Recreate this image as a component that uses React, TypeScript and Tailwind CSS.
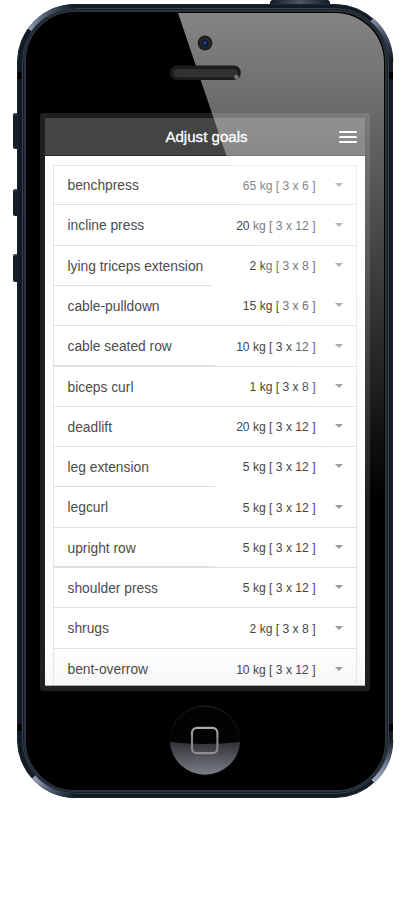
import React from "react";

type Goal = { name: string; kg: string; reps: string; h: string; line: string };

const FULL = "w-full border-[#e0e0e0]";

const goals: Goal[] = [
  { name: "benchpress", kg: "65", reps: "6", h: "h-[39px]", line: FULL },
  { name: "incline press", kg: "20", reps: "12", h: "h-[41px]", line: FULL },
  { name: "lying triceps extension", kg: "2", reps: "8", h: "h-[40px]", line: "w-[157px] border-[#dedede]" },
  { name: "cable-pulldown", kg: "15", reps: "6", h: "h-[40px]", line: FULL },
  { name: "cable seated row", kg: "10", reps: "12", h: "h-[41px]", line: FULL },
  { name: "biceps curl", kg: "1", reps: "8", h: "h-[40px]", line: FULL },
  { name: "deadlift", kg: "20", reps: "12", h: "h-[40px]", line: FULL },
  { name: "leg extension", kg: "5", reps: "12", h: "h-[40px]", line: "w-[161px] border-[#dedede]" },
  { name: "legcurl", kg: "5", reps: "12", h: "h-[41px]", line: FULL },
  { name: "upright row", kg: "5", reps: "12", h: "h-[40px]", line: FULL },
  { name: "shoulder press", kg: "5", reps: "12", h: "h-[40px]", line: FULL },
  { name: "shrugs", kg: "2", reps: "8", h: "h-[41px]", line: FULL },
  { name: "bent-overrow", kg: "10", reps: "12", h: "h-[41px]", line: FULL },
];

const doubled = ["cable seated row", "upright row"];

function GoalRow({ goal }: { goal: Goal }) {
  return (
    <li className={`flex shrink-0 flex-col ${goal.h}`}>
      <div className="flex min-h-0 flex-1 items-center pl-[13.5px] pr-[13.5px] pt-[2px]">
        <span className="flex-1 whitespace-nowrap text-[13.8px] leading-[18px] text-[#4c4c4c]">{goal.name}</span>
        <span className="mb-[1px] whitespace-nowrap text-[12.1px] leading-[18px] text-[#464646]">
          {goal.kg} kg [ 3 x {goal.reps} ]
        </span>
        <svg className="mb-[3px] ml-[19px]" width="8" height="4" viewBox="0 0 8 4">
          <path d="M0 0H8L4 4Z" fill="#999" />
        </svg>
      </div>
      {doubled.includes(goal.name) && <div className="-mt-px h-px w-[161px] bg-[#e0e0e0]" />}
      <div className={`border-b ${goal.line}`} />
    </li>
  );
}

function Header() {
  return (
    <header className="flex h-[38px] shrink-0 items-center border-b border-[#262626] bg-[#444] pl-[26px] pr-[8px]">
      <h1 className="flex-1 pl-[3px] text-center text-[15.1px] font-medium leading-[20px] text-white [-webkit-text-stroke:0.3px_white]">
        Adjust goals
      </h1>
      <div className="flex w-[18px] flex-col gap-[3px]">
        <i className="h-[2px] rounded-full bg-white" />
        <i className="h-[2px] rounded-full bg-white" />
        <i className="h-[2px] rounded-full bg-white" />
      </div>
    </header>
  );
}

function Camera() {
  return (
    <svg className="mt-[22px]" width="16" height="16" viewBox="0 0 16 16">
      <defs>
        <radialGradient id="lens">
          <stop offset="0" stopColor="#2457a8" />
          <stop offset="0.5" stopColor="#102c62" />
          <stop offset="1" stopColor="#0a0d18" />
        </radialGradient>
      </defs>
      <circle cx="8" cy="8" r="7.4" fill="#1d1d1f" />
      <circle cx="8" cy="8" r="5" fill="#2b2c30" />
      <circle cx="8" cy="8" r="3.5" fill="url(#lens)" />
    </svg>
  );
}

function Speaker() {
  return (
    <svg className="mt-[14px]" width="72" height="16" viewBox="0 0 72 16">
      <defs>
        <pattern id="mesh" width="2" height="2" patternUnits="userSpaceOnUse">
          <rect width="2" height="2" fill="#3b3b3b" />
          <rect width="1" height="1" fill="#242424" />
          <rect x="1" y="1" width="1" height="1" fill="#2b2b2b" />
        </pattern>
        <radialGradient id="spark">
          <stop offset="0" stopColor="#bbb" />
          <stop offset="1" stopColor="#777" stopOpacity="0" />
        </radialGradient>
      </defs>
      <rect x="0.8" y="0.5" width="71" height="14.5" rx="7.2" fill="#1c1c1c" />
      <rect x="4.5" y="4" width="64" height="8" rx="4" fill="url(#mesh)" />
      <circle cx="67.3" cy="12" r="3.2" fill="url(#spark)" />
    </svg>
  );
}

function HomeButton() {
  return (
    <svg width="72" height="72" viewBox="0 0 72 72">
      <defs>
        <linearGradient id="shine" x1="0" y1="0" x2="0" y2="1">
          <stop offset="0" stopColor="#303136" />
          <stop offset="1" stopColor="#7b7e86" />
        </linearGradient>
        <linearGradient id="rim" x1="0" y1="0" x2="0" y2="1">
          <stop offset="0" stopColor="#2c2c2c" />
          <stop offset="0.5" stopColor="#080808" />
        </linearGradient>
        <linearGradient id="square" x1="0" y1="0" x2="0" y2="1">
          <stop offset="0" stopColor="#aaa" />
          <stop offset="0.5" stopColor="#808184" />
          <stop offset="1" stopColor="#8c8e92" />
        </linearGradient>
      </defs>
      <circle cx="36" cy="36" r="35" fill="#030303" stroke="url(#rim)" strokeWidth="0.8" />
      <path d="M0.8 37Q36 41 71.2 37A35.3 35.3 0 0 1 0.8 37Z" fill="url(#shine)" />
      <rect x="23" y="22.8" width="25.4" height="25.4" rx="5" fill="none" stroke="url(#square)" strokeWidth="2.2" />
    </svg>
  );
}

function EdgeHighlights() {
  return (
    <svg className="pointer-events-none absolute inset-0" width="377" height="794" viewBox="0 0 377 794">
      <defs>
        <linearGradient id="tl" gradientUnits="userSpaceOnUse" x1="12" y1="26" x2="58" y2="2">
          <stop offset="0" stopColor="#929caf" />
          <stop offset="0.35" stopColor="#5c677b" />
          <stop offset="1" stopColor="#111a25" />
        </linearGradient>
        <linearGradient id="tr" gradientUnits="userSpaceOnUse" x1="354" y1="16" x2="374" y2="58">
          <stop offset="0" stopColor="#8792a7" />
          <stop offset="0.4" stopColor="#465165" />
          <stop offset="1" stopColor="#111a25" />
        </linearGradient>
        <linearGradient id="bl" gradientUnits="userSpaceOnUse" x1="16" y1="773" x2="58" y2="792">
          <stop offset="0" stopColor="#9aa6bc" />
          <stop offset="0.4" stopColor="#56637a" />
          <stop offset="1" stopColor="#111a25" />
        </linearGradient>
        <linearGradient id="br" gradientUnits="userSpaceOnUse" x1="356" y1="779" x2="374" y2="734">
          <stop offset="0" stopColor="#a3aec2" />
          <stop offset="0.4" stopColor="#77839a" />
          <stop offset="1" stopColor="#111a25" />
        </linearGradient>
      </defs>
      <g fill="none" strokeWidth="4.4">
        <path d="M12.5 25.8A56 56 0 0 1 58.4 2.2" stroke="url(#tl)" />
        <path d="M355 15.7A56 56 0 0 1 374.1 58" stroke="url(#tr)" />
        <path d="M16.6 773A56 56 0 0 0 58.4 791.8" stroke="url(#bl)" />
        <path d="M356 777.3A56 56 0 0 0 374.1 736" stroke="url(#br)" />
      </g>
      <g fill="#000">
        <rect x="0.5" y="68" width="4" height="7" />
        <rect x="372" y="68" width="4" height="7" />
        <rect x="0.5" y="720" width="4" height="7" />
        <rect x="372" y="720" width="4" height="7" />
      </g>
    </svg>
  );
}

export default function App() {
  return (
    <main
      className="h-[917px] w-[411px] overflow-hidden bg-white pl-[17px] pt-[4px]"
      style={{ fontFamily: '"Liberation Sans", Arial, sans-serif' }}
    >
      <div className="relative h-[794px] w-[377px]">
        <div className="absolute -top-[4px] left-[253px] h-[6px] w-[60px] rounded-t-[3px] bg-linear-to-r from-[#141d28] via-[#4b5663] to-[#141d28]" />
        <div className="absolute -left-[4px] top-[109px] h-[36px] w-[6px] rounded-l-[2px] border-t-2 border-[#3a4553] bg-[#151d29]" />
        <div className="absolute -left-[4px] top-[185px] h-[27px] w-[6px] rounded-l-[2px] border-t-2 border-[#3a4553] bg-[#151d29]" />
        <div className="absolute -left-[4px] top-[250px] h-[28px] w-[6px] rounded-l-[2px] border-t-2 border-[#3a4553] bg-[#151d29]" />

        <div className="relative ml-[0.4px] h-full w-[376px] rounded-[58px] border border-[#1b2531] bg-[#111a25] p-[3.4px]">
          <div className="h-full rounded-[53.6px] border-[1.5px] border-[#364251] bg-[#141c25] p-px">
            <div className="h-full rounded-[51px] border-2 border-[#2b3239] bg-black" />
          </div>
        </div>
        <EdgeHighlights />

        <div className="absolute inset-y-[9px] left-[9px] flex w-[358px] flex-col items-center overflow-hidden rounded-[49px]">
          <div className="relative z-10 flex h-[100px] flex-col items-center">
            <Camera />
            <Speaker />
          </div>
          <div className="h-[578px] w-[330px] shrink-0 rounded-[3px] bg-[#1f1f20] px-[5px] pb-[4px] pt-[5px]">
            <div className="flex h-[568px] flex-col overflow-hidden bg-white">
              <Header />
              <div className="min-h-0 flex-1 bg-linear-to-b from-white from-[93%] to-[#f6f6f6] px-[8px] pt-[9px]">
                <ul className="h-[521px] overflow-hidden border-x border-t border-[#e5e5e5]">
                  {goals.map((goal) => (
                    <GoalRow key={goal.name} goal={goal} />
                  ))}
                </ul>
              </div>
              <div className="h-px shrink-0 bg-[#aaa]" />
            </div>
          </div>
          <div className="mt-[14px]">
            <HomeButton />
          </div>

          {/* Diagonal glass reflection lying over the bezel and the display */}
          <div className="pointer-events-none absolute inset-x-0 top-0 h-[487px] bg-linear-to-b from-white/52 to-white/0 [clip-path:polygon(152px_0,100%_0,100%_100%,317px_100%)]" />
        </div>
      </div>
    </main>
  );
}
